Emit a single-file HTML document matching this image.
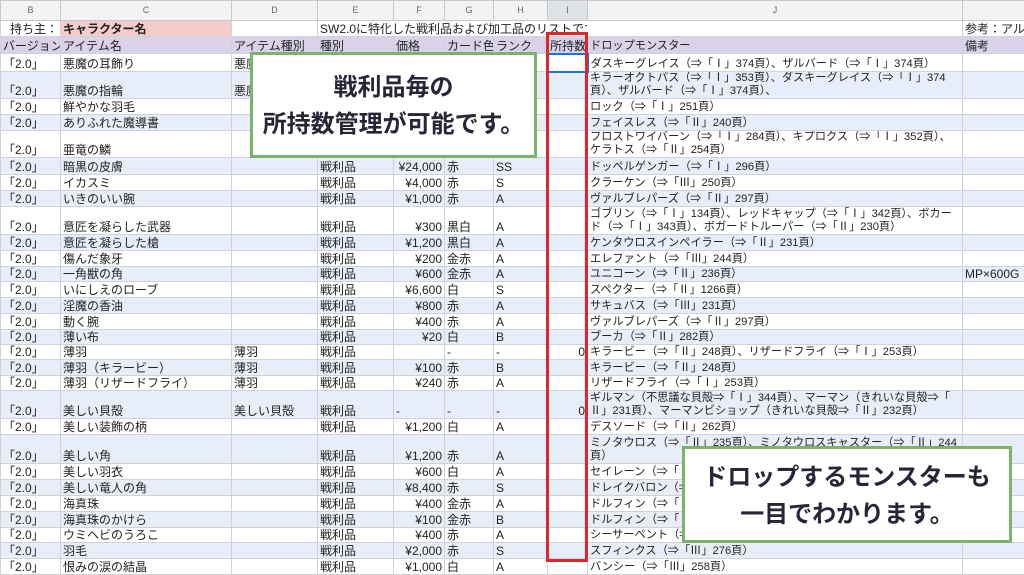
<!DOCTYPE html>
<html><head><meta charset="utf-8">
<style>
*{margin:0;padding:0;box-sizing:border-box}
body{width:1024px;height:564px;overflow:hidden;background:#fff;font-family:"Liberation Sans","Noto Sans CJK JP",sans-serif;font-size:12px;color:#222;position:relative}
table{border-collapse:collapse;table-layout:fixed;position:absolute;left:0;top:0;width:1024px}
td{border:1px solid #cfd3d8;padding:0 2px;white-space:nowrap;overflow:hidden;vertical-align:bottom;line-height:13px}
td.j{font-size:11.2px}
tr.h td{background:#f3f3f3;color:#666;font-size:9px;text-align:center;vertical-align:middle;border-color:#c8c8c8}
tr.h td.sel{background:#dfe3e8}
tr.p td{background:#d9d2e9}
tr.b td{background:#e8eef9}
td.r{text-align:right}
.box{position:absolute;background:#fff;border:3px solid #7cb36a;color:#2a2438;font-weight:bold;text-align:center;font-family:"Liberation Sans","Noto Sans CJK JP",sans-serif}
</style></head><body>
<table>
<colgroup><col style="width:60px"><col style="width:171px"><col style="width:86px"><col style="width:76px"><col style="width:51px"><col style="width:49px"><col style="width:54px"><col style="width:40px"><col style="width:375px"><col style="width:62px"></colgroup>
<tr class="h" style="height:20px"><td>B</td><td>C</td><td>D</td><td>E</td><td>F</td><td>G</td><td>H</td><td class="sel">I</td><td>J</td><td></td></tr>
<tr style="height:16px"><td class="r">持ち主：</td><td style="background:#f4cccc;font-weight:bold">キャラクター名</td><td></td><td colspan="5" style="border-right-color:transparent">SW2.0に特化した戦利品および加工品のリストです</td><td></td><td>参考：アルケミスト</td></tr>
<tr class="p" style="height:17px"><td>バージョン</td><td>アイテム名</td><td>アイテム種別</td><td>種別</td><td>価格</td><td>カード色</td><td>ランク</td><td>所持数</td><td class="j">ドロップモンスター</td><td>備考</td></tr>
<tr style="height:18px"><td>「2.0」</td><td>悪魔の耳飾り</td><td>悪魔の耳飾り</td><td></td><td></td><td></td><td></td><td style="border:2px solid #1a73e8"></td><td class="j">ダスキーグレイス（⇒「Ⅰ」374頁）、ザルバード（⇒「Ⅰ」374頁）</td><td></td></tr>
<tr class="b" style="height:26px"><td>「2.0」</td><td>悪魔の指輪</td><td>悪魔の指輪</td><td></td><td></td><td></td><td></td><td></td><td class="j">キラーオクトパス（⇒「Ⅰ」353頁）、ダスキーグレイス（⇒「Ⅰ」374<br>頁）、ザルバード（⇒「Ⅰ」374頁）、</td><td></td></tr>
<tr style="height:16px"><td>「2.0」</td><td>鮮やかな羽毛</td><td></td><td></td><td></td><td></td><td></td><td></td><td class="j">ロック（⇒「Ⅰ」251頁）</td><td></td></tr>
<tr class="b" style="height:16px"><td>「2.0」</td><td>ありふれた魔導書</td><td></td><td></td><td></td><td></td><td></td><td></td><td class="j">フェイスレス（⇒「Ⅱ」240頁）</td><td></td></tr>
<tr style="height:27px"><td>「2.0」</td><td>亜竜の鱗</td><td></td><td></td><td></td><td></td><td></td><td></td><td class="j">フロストワイバーン（⇒「Ⅰ」284頁）、キプロクス（⇒「Ⅰ」352頁）、<br>ケラトス（⇒「Ⅱ」254頁）</td><td></td></tr>
<tr class="b" style="height:17px"><td>「2.0」</td><td>暗黒の皮膚</td><td></td><td>戦利品</td><td class="r">¥24,000</td><td>赤</td><td>SS</td><td></td><td class="j">ドッペルゲンガー（⇒「Ⅰ」296頁）</td><td></td></tr>
<tr style="height:16px"><td>「2.0」</td><td>イカスミ</td><td></td><td>戦利品</td><td class="r">¥4,000</td><td>赤</td><td>S</td><td></td><td class="j">クラーケン（⇒「Ⅲ」250頁）</td><td></td></tr>
<tr class="b" style="height:16px"><td>「2.0」</td><td>いきのいい腕</td><td></td><td>戦利品</td><td class="r">¥1,000</td><td>赤</td><td>A</td><td></td><td class="j">ヴァルブレパーズ（⇒「Ⅱ」297頁）</td><td></td></tr>
<tr style="height:28px"><td>「2.0」</td><td>意匠を凝らした武器</td><td></td><td>戦利品</td><td class="r">¥300</td><td>黒白</td><td>A</td><td></td><td class="j">ゴブリン（⇒「Ⅰ」134頁）、レッドキャップ（⇒「Ⅰ」342頁）、ボカー<br>ド（⇒「Ⅰ」343頁）、ボガードトルーパー（⇒「Ⅱ」230頁）</td><td></td></tr>
<tr class="b" style="height:16px"><td>「2.0」</td><td>意匠を凝らした槍</td><td></td><td>戦利品</td><td class="r">¥1,200</td><td>黒白</td><td>A</td><td></td><td class="j">ケンタウロスインペイラー（⇒「Ⅱ」231頁）</td><td></td></tr>
<tr style="height:16px"><td>「2.0」</td><td>傷んだ象牙</td><td></td><td>戦利品</td><td class="r">¥200</td><td>金赤</td><td>A</td><td></td><td class="j">エレファント（⇒「Ⅲ」244頁）</td><td></td></tr>
<tr class="b" style="height:15px"><td>「2.0」</td><td>一角獣の角</td><td></td><td>戦利品</td><td class="r">¥600</td><td>金赤</td><td>A</td><td></td><td class="j">ユニコーン（⇒「Ⅱ」236頁）</td><td>MP×600G</td></tr>
<tr style="height:16px"><td>「2.0」</td><td>いにしえのローブ</td><td></td><td>戦利品</td><td class="r">¥6,600</td><td>白</td><td>S</td><td></td><td class="j">スペクター（⇒「Ⅱ」1266頁）</td><td></td></tr>
<tr class="b" style="height:16px"><td>「2.0」</td><td>淫魔の香油</td><td></td><td>戦利品</td><td class="r">¥800</td><td>赤</td><td>A</td><td></td><td class="j">サキュバス（⇒「Ⅲ」231頁）</td><td></td></tr>
<tr style="height:16px"><td>「2.0」</td><td>動く腕</td><td></td><td>戦利品</td><td class="r">¥400</td><td>赤</td><td>A</td><td></td><td class="j">ヴァルブレパーズ（⇒「Ⅱ」297頁）</td><td></td></tr>
<tr class="b" style="height:15px"><td>「2.0」</td><td>薄い布</td><td></td><td>戦利品</td><td class="r">¥20</td><td>白</td><td>B</td><td></td><td class="j">ブーカ（⇒「Ⅱ」282頁）</td><td></td></tr>
<tr style="height:15px"><td>「2.0」</td><td>薄羽</td><td>薄羽</td><td>戦利品</td><td></td><td>-</td><td>-</td><td class="r">0</td><td class="j">キラービー（⇒「Ⅱ」248頁）、リザードフライ（⇒「Ⅰ」253頁）</td><td></td></tr>
<tr class="b" style="height:16px"><td>「2.0」</td><td>薄羽（キラービー）</td><td>薄羽</td><td>戦利品</td><td class="r">¥100</td><td>赤</td><td>B</td><td></td><td class="j">キラービー（⇒「Ⅱ」248頁）</td><td></td></tr>
<tr style="height:15px"><td>「2.0」</td><td>薄羽（リザードフライ）</td><td>薄羽</td><td>戦利品</td><td class="r">¥240</td><td>赤</td><td>A</td><td></td><td class="j">リザードフライ（⇒「Ⅰ」253頁）</td><td></td></tr>
<tr class="b" style="height:28px"><td>「2.0」</td><td>美しい貝殻</td><td>美しい貝殻</td><td>戦利品</td><td>-</td><td>-</td><td>-</td><td class="r">0</td><td class="j">ギルマン（不思議な貝殻⇒「Ⅰ」344頁）、マーマン（きれいな貝殻⇒「<br>Ⅱ」231頁）、マーマンビショップ（きれいな貝殻⇒「Ⅱ」232頁）</td><td></td></tr>
<tr style="height:16px"><td>「2.0」</td><td>美しい装飾の柄</td><td></td><td>戦利品</td><td class="r">¥1,200</td><td>白</td><td>A</td><td></td><td class="j">デスソード（⇒「Ⅱ」262頁）</td><td></td></tr>
<tr class="b" style="height:29px"><td>「2.0」</td><td>美しい角</td><td></td><td>戦利品</td><td class="r">¥1,200</td><td>赤</td><td>A</td><td></td><td class="j">ミノタウロス（⇒「Ⅱ」235頁）、ミノタウロスキャスター（⇒「Ⅱ」244<br>頁）</td><td></td></tr>
<tr style="height:16px"><td>「2.0」</td><td>美しい羽衣</td><td></td><td>戦利品</td><td class="r">¥600</td><td>白</td><td>A</td><td></td><td class="j">セイレーン（⇒「Ⅱ」247頁）</td><td></td></tr>
<tr class="b" style="height:16px"><td>「2.0」</td><td>美しい竜人の角</td><td></td><td>戦利品</td><td class="r">¥8,400</td><td>赤</td><td>S</td><td></td><td class="j">ドレイクバロン（⇒「Ⅱ」271頁）</td><td></td></tr>
<tr style="height:16px"><td>「2.0」</td><td>海真珠</td><td></td><td>戦利品</td><td class="r">¥400</td><td>金赤</td><td>A</td><td></td><td class="j">ドルフィン（⇒「Ⅱ」250頁）</td><td></td></tr>
<tr class="b" style="height:16px"><td>「2.0」</td><td>海真珠のかけら</td><td></td><td>戦利品</td><td class="r">¥100</td><td>金赤</td><td>B</td><td></td><td class="j">ドルフィン（⇒「Ⅱ」250頁）</td><td></td></tr>
<tr style="height:15px"><td>「2.0」</td><td>ウミヘビのうろこ</td><td></td><td>戦利品</td><td class="r">¥400</td><td>赤</td><td>A</td><td></td><td class="j">シーサーペント（⇒「Ⅱ」260頁）</td><td></td></tr>
<tr class="b" style="height:16px"><td>「2.0」</td><td>羽毛</td><td></td><td>戦利品</td><td class="r">¥2,000</td><td>赤</td><td>S</td><td></td><td class="j">スフィンクス（⇒「Ⅲ」276頁）</td><td></td></tr>
<tr style="height:16px"><td>「2.0」</td><td>恨みの涙の結晶</td><td></td><td>戦利品</td><td class="r">¥1,000</td><td>白</td><td>A</td><td></td><td class="j">バンシー（⇒「Ⅲ」258頁）</td><td></td></tr>
</table>
<div style="position:absolute;left:546px;top:32px;width:42px;height:530px;border:3px solid #e0262b"></div>
<div class="box" style="left:250px;top:52px;width:287px;height:106px;font-size:24px;line-height:37px;padding-top:14px">戦利品毎の<br>所持数管理が可能です。</div>
<div class="box" style="left:682px;top:446px;width:330px;height:97px;font-size:24px;line-height:37px;padding-top:10px">ドロップするモンスターも<br>一目でわかります。</div>
</body></html>
